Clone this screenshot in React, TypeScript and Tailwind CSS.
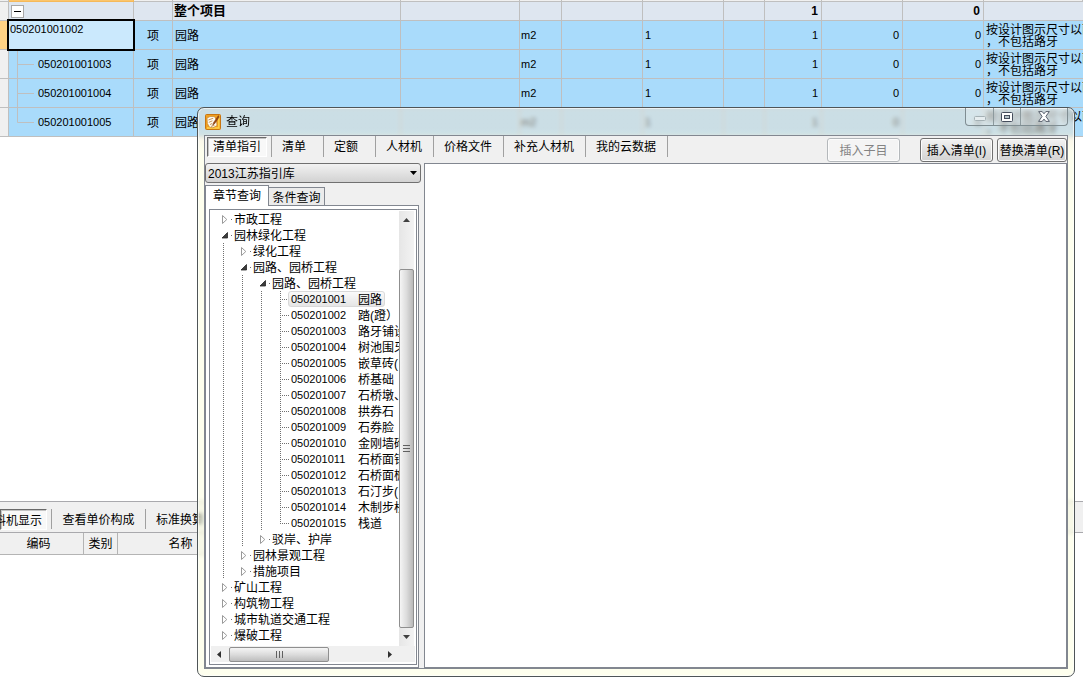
import React, { useState } from "react";

type BillRow = { code: string; selected?: boolean; last?: boolean };

const billRows: BillRow[] = [
  { code: "050201001002", selected: true },
  { code: "050201001003" },
  { code: "050201001004" },
  { code: "050201001005", last: true },
];

type TreeItem = { depth: number; label: string; code?: string; open?: boolean; last?: boolean };

const treeItems: TreeItem[] = [
  { depth: 0, label: "市政工程" },
  { depth: 0, label: "园林绿化工程", open: true },
  { depth: 1, label: "绿化工程" },
  { depth: 1, label: "园路、园桥工程", open: true },
  { depth: 2, label: "园路、园桥工程", open: true },
  { depth: 3, code: "050201001", label: "园路" },
  { depth: 3, code: "050201002", label: "踏(蹬）" },
  { depth: 3, code: "050201003", label: "路牙铺设" },
  { depth: 3, code: "050201004", label: "树池围牙" },
  { depth: 3, code: "050201005", label: "嵌草砖(" },
  { depth: 3, code: "050201006", label: "桥基础" },
  { depth: 3, code: "050201007", label: "石桥墩、" },
  { depth: 3, code: "050201008", label: "拱券石" },
  { depth: 3, code: "050201009", label: "石券脸" },
  { depth: 3, code: "050201010", label: "金刚墙砌" },
  { depth: 3, code: "050201011", label: "石桥面铺" },
  { depth: 3, code: "050201012", label: "石桥面檐" },
  { depth: 3, code: "050201013", label: "石汀步(" },
  { depth: 3, code: "050201014", label: "木制步桥" },
  { depth: 3, code: "050201015", label: "栈道", last: true },
  { depth: 2, label: "驳岸、护岸" },
  { depth: 1, label: "园林景观工程" },
  { depth: 1, label: "措施项目" },
  { depth: 0, label: "矿山工程" },
  { depth: 0, label: "构筑物工程" },
  { depth: 0, label: "城市轨道交通工程" },
  { depth: 0, label: "爆破工程" },
];

const moduleTabs = ["清单", "定额", "人材机", "价格文件", "补充人材机", "我的云数据"];

const cell = "border-r border-b border-[#bfbfbf] p-0 align-middle overflow-hidden whitespace-nowrap";
const endCell = "border-b border-[#bfbfbf] p-0 align-middle overflow-hidden whitespace-nowrap";
const sunken =
  "border border-t-[#696969] border-l-[#696969] border-r-white border-b-white bg-[#f8f8f8] shadow-[inset_1px_1px_0_#c4c4c4]";
const pushButton =
  "h-6 shrink-0 whitespace-nowrap rounded-[3px] border pt-px text-center text-[12px] leading-[22px] shadow-[inset_0_0_0_1px_#fcfcfc]";

function BillTable() {
  return (
    <table className="w-full shrink-0 table-fixed border-separate border-spacing-0">
      <colgroup>
        <col className="w-[9px]" />
        <col className="w-[125px]" />
        <col className="w-[39px]" />
        <col className="w-[228px]" />
        <col className="w-[119px]" />
        <col className="w-[42px]" />
        <col className="w-[81px]" />
        <col className="w-[81px]" />
        <col className="w-[41px]" />
        <col className="w-[57px]" />
        <col className="w-[81px]" />
        <col className="w-[81px]" />
        <col />
      </colgroup>
      <tbody>
        <tr className="h-[2px] bg-[#f0f0f0]">
          {Array.from({ length: 13 }, (_, i) => (
            <td key={i} className={i === 1 ? "border-r border-b border-[#f5b95a] bg-[#fbc56c] p-0" : cell} />
          ))}
        </tr>
        <tr className="h-[19px] bg-[#dee6f0] text-[13px] leading-[18px] font-bold">
          <td className={`${cell} bg-[#f0f0f0]`} />
          <td className={cell}>
            <button
              aria-label="折叠"
              className="ml-[2px] flex size-[13px] items-center justify-center border border-[#a8a8a8] bg-white"
            >
              <span className="h-px w-[7px] bg-black" />
            </button>
          </td>
          <td className={cell} />
          <td className={`${cell} pl-px`}>整个项目</td>
          <td className={cell} />
          <td className={cell} />
          <td className={cell} />
          <td className={cell} />
          <td className={cell} />
          <td className={`${cell} pr-[3px] text-right text-[12px]`}>1</td>
          <td className={cell} />
          <td className={`${cell} pr-[3px] text-right text-[12px]`}>0</td>
          <td className={endCell} />
        </tr>
        {billRows.map((row) => (
          <tr key={row.code} className="h-[29px] bg-[#a9dbfb] text-[11px] leading-4">
            <td className={`${cell} ${row.selected ? "bg-[#fdd285]" : "bg-[#f0f0f0]"}`} />
            {row.selected ? (
              <td className="relative border-r border-b border-[#bfbfbf] p-0">
                <div className="absolute -inset-[2px] border-2 border-black bg-[#cbe9fd] pl-px leading-4">
                  {row.code}
                </div>
              </td>
            ) : (
              <td className={cell}>
                <div className="flex h-7 items-center">
                  <svg className="mr-1 ml-2 h-7 w-[17px] shrink-0" viewBox="0 0 17 28" fill="none" stroke="#bfbfbf">
                    <path d={row.last ? "M.5 0V14.5H17" : "M.5 0V28M.5 14.5H17"} />
                  </svg>
                  {row.code}
                </div>
              </td>
            )}
            <td className={`${cell} pt-[2px] text-center text-[12px]`}>项</td>
            <td className={`${cell} pt-[2px] pl-[2px] text-[12px]`}>园路</td>
            <td className={cell} />
            <td className={`${cell} pl-px`}>m2</td>
            <td className={cell} />
            <td className={`${cell} pl-[2px]`}>1</td>
            <td className={cell} />
            <td className={`${cell} pr-[3px] text-right`}>1</td>
            <td className={`${cell} pr-[3px] text-right`}>0</td>
            <td className={`${cell} pr-[2px] text-right`}>0</td>
            <td className={`${endCell} pt-[2px] pl-[2px] text-[12px] leading-3`}>
              按设计图示尺寸以面
              <br />
              ，不包括路牙
            </td>
          </tr>
        ))}
      </tbody>
    </table>
  );
}

function DetailPane() {
  return (
    <section className="h-[185px] shrink-0 text-[12px]">
      <div className="flex h-8 items-start overflow-hidden border-y border-[#a9a9ad] bg-[#f0f0f0] pt-[7px]">
        <button className={`${sunken} flex h-[21px] w-[47px] shrink-0 justify-end pt-px pr-1 leading-5 whitespace-nowrap`}>
          工料机显示
        </button>
        <span className="ml-1 h-5 w-px bg-[#a0a0a0]" />
        <button className="h-[21px] w-[93px] pt-px leading-5">查看单价构成</button>
        <span className="h-5 w-px bg-[#a0a0a0]" />
        <button className="h-[21px] px-[10px] pt-px leading-5">标准换算</button>
      </div>
      <table className="table-fixed border-separate border-spacing-0 bg-[#f0f0f0]">
        <thead>
          <tr className="h-[22px]">
            <th className="w-[84px] border-r border-b border-[#b4b4b4] p-0 pt-px pr-[6px] font-normal">编码</th>
            <th className="w-[34px] border-r border-b border-[#b4b4b4] p-0 pt-px font-normal">类别</th>
            <th className="w-[126px] border-r border-b border-[#b4b4b4] p-0 pt-px font-normal">名称</th>
          </tr>
        </thead>
      </table>
    </section>
  );
}

function Guide() {
  return (
    <svg className="h-4 w-[19px] shrink-0" viewBox="0 0 19 16" fill="none" stroke="#707070">
      <path d="M2.5 0V16" strokeDasharray="1 1" />
    </svg>
  );
}

function NodeMark({ item }: { item: TreeItem }) {
  return (
    <svg className="h-4 w-[13px] shrink-0" viewBox="0 0 13 16" fill="none">
      {item.code ? (
        <path
          d={item.last ? "M2.5 0V9M2 8.5H12" : "M2.5 0V16M4 8.5H12"}
          stroke="#707070"
          strokeDasharray="1 1"
        />
      ) : (
        <>
          {item.open ? (
            <path d="M6.5 5.5V11H1Z" fill="#3c3c3c" stroke="#262626" strokeWidth=".8" />
          ) : (
            <path d="M1.5 4.5V12.5L5.8 8.5Z" fill="#fff" stroke="#9a9a9a" />
          )}
          <path d="M10 8.5H11" stroke="#707070" />
        </>
      )}
    </svg>
  );
}

function CatalogueTree() {
  const [selected, setSelected] = useState("050201001");
  return (
    <ul className="min-w-0 flex-1 overflow-hidden text-[12px] leading-4">
      {treeItems.map((item, i) => (
        <li key={i} className="flex h-4 pl-[10px] whitespace-nowrap">
          {Array.from({ length: item.depth }, (_, d) => (
            <Guide key={d} />
          ))}
          <NodeMark item={item} />
          {item.code ? (
            <button
              onClick={() => setSelected(item.code!)}
              className={`-ml-[3px] flex h-4 shrink-0 items-center rounded-[3px] border px-[2px] ${
                item.code === selected
                  ? "border-[#d9d9d9] bg-linear-to-b from-[#fafafa] to-[#e5e5e5]"
                  : "border-transparent"
              }`}
            >
              <span className="w-[67px] text-left text-[11px]">{item.code}</span>
              <span className="pt-[2px]">{item.label}</span>
            </button>
          ) : (
            <button className="flex h-4 shrink-0 items-center pt-[2px]">{item.label}</button>
          )}
        </li>
      ))}
    </ul>
  );
}

function VerticalScroll() {
  return (
    <div className="mr-px flex w-[15px] shrink-0 flex-col bg-linear-to-r from-[#e6e6e6] to-[#f3f3f3]">
      <div className="flex h-[58px] justify-center pt-[7px]">
        <svg className="h-1 w-[7px]" viewBox="0 0 7 4"><path d="M0 4L3.5 0L7 4Z" fill="#404040" /></svg>
      </div>
      <div className="flex flex-1 flex-col items-center justify-center gap-[2px] rounded-[2px] border border-[#8f8f8f] bg-linear-to-r from-[#f5f5f5] via-[#dcdcdc] to-[#b9b9b9]">
        <span className="h-px w-[7px] bg-[#606060]" />
        <span className="h-px w-[7px] bg-[#606060]" />
        <span className="h-px w-[7px] bg-[#606060]" />
      </div>
      <div className="flex h-[18px] items-center justify-center">
        <svg className="h-1 w-[7px]" viewBox="0 0 7 4"><path d="M0 0L3.5 4L7 0Z" fill="#404040" /></svg>
      </div>
    </div>
  );
}

function HorizontalScroll() {
  return (
    <div className="flex h-4 shrink-0 items-center bg-[#f0f0f0] pr-4">
      <div className="flex h-4 w-[18px] shrink-0 items-center pl-[6px]">
        <svg className="h-[7px] w-1" viewBox="0 0 4 7"><path d="M4 0L0 3.5L4 7Z" fill="#303030" /></svg>
      </div>
      <div className="flex h-[15px] w-[100px] items-center justify-center gap-[2px] rounded-[2px] border border-[#8f8f8f] bg-linear-to-b from-[#f5f5f5] via-[#dcdcdc] to-[#bdbdbd]">
        <span className="h-[7px] w-px bg-[#606060]" />
        <span className="h-[7px] w-px bg-[#606060]" />
        <span className="h-[7px] w-px bg-[#606060]" />
      </div>
      <div className="flex h-4 flex-1 items-center justify-end pr-[7px]">
        <svg className="h-[7px] w-1" viewBox="0 0 4 7"><path d="M0 0L4 3.5L0 7Z" fill="#303030" /></svg>
      </div>
    </div>
  );
}

function AppIcon() {
  return (
    <svg className="size-4" viewBox="0 0 16 16" fill="none">
      <rect x=".5" y=".5" width="15" height="15" rx="1" fill="#f0a020" stroke="#c87410" />
      <path d="M13.8 2V14H2" stroke="#ffd34a" strokeWidth="1.4" />
      <path d="M2 4L5 2.6L9.4 2.4L11.4 6L12 11.5L8 13.8L4.6 13.2L2.4 9.5Z" fill="#fffaf0" stroke="#c8842a" strokeWidth=".7" />
      <path d="M3.4 6L8.2 4.2M3.8 8.4L7.4 6.8M5 10.6L7.2 9.4M6 12.4L9.4 11.4" stroke="#c08a48" strokeWidth=".9" />
      <path d="M13.4 1.6L8.6 8.4L7.6 11.2L9.8 9.6L14.2 3Z" fill="#9a4610" stroke="#6e2c06" strokeWidth=".4" />
    </svg>
  );
}

function WindowButtons() {
  return (
    <div className="flex h-[18px] overflow-hidden rounded-b-[4px] border border-t-0 border-[#7f8d92] bg-white/20">
      <button aria-label="最小化" className="flex w-[27px] items-center justify-center">
        <svg className="mt-[3px] h-[5px] w-3" viewBox="0 0 12 5">
          <rect x=".5" y=".5" width="11" height="4" rx="1" fill="#e6edef" stroke="#a4b0b4" />
        </svg>
      </button>
      <button aria-label="最大化" className="flex w-[28px] items-center justify-center border-x border-[#8c999d]">
        <svg className="h-[10px] w-3" viewBox="0 0 12 10">
          <rect x=".5" y=".5" width="11" height="9" rx="1" fill="#fff" stroke="#454d5c" />
          <rect x="3.5" y="3.5" width="5" height="3" fill="#b4c2c8" stroke="#454d5c" />
        </svg>
      </button>
      <button aria-label="关闭" className="flex w-[46px] items-center justify-center">
        <svg className="h-[11px] w-3" viewBox="0 0 12 11">
          <path
            d="M.7.6H4.2L6 2.8L7.8.6H11.3L7.9 5.4L11.4 10.4H7.8L6 8.1L4.2 10.4H.6L4.1 5.4Z"
            fill="#fff"
            stroke="#4a5160"
            strokeWidth=".9"
          />
        </svg>
      </button>
    </div>
  );
}

function QueryDialog() {
  return (
    <div
      role="dialog"
      aria-labelledby="query-title"
      className="absolute top-[107px] right-2 bottom-[9px] left-[197px] flex flex-col rounded-[7px] border border-[#4f5557] bg-[linear-gradient(#ede1cf80_0px,#ede1cf80_20px,#fdffdd80_44px)] px-[6px] pb-[7px] shadow-[inset_0_0_0_1px_#ffffffa0] backdrop-blur-[2px]"
    >
      <header className="flex h-[27px] shrink-0 justify-between">
        <div className="flex items-center gap-[5px] pl-px text-[12px]">
          <AppIcon />
          <h1 id="query-title">查询</h1>
        </div>
        <WindowButtons />
      </header>

      <div className="flex min-h-0 flex-1 flex-col border border-[#828790] bg-[#f0f0f0]">
        <div className="flex h-[27px] shrink-0 items-start justify-between">
          <nav className="flex pl-[2px] text-[12px] leading-5">
            <button className={`${sunken} mt-px mr-1 h-5 w-[60px] leading-[18px]`}>清单指引</button>
            {moduleTabs.map((tab) => (
              <button
                key={tab}
                className="h-[21px] min-w-[52px] border-l border-[#a0a0a0] pr-[11px] pl-[10px] text-left last:border-r"
              >
                {tab}
              </button>
            ))}
          </nav>
          <div className="flex pt-[2px]">
            <button disabled className={`${pushButton} mr-5 w-[73px] border-[#b4b8bb] bg-[#f4f4f4] text-[#838383]`}>
              插入子目
            </button>
            <button className={`${pushButton} mr-1 w-[73px] border-[#707070] bg-linear-to-b from-[#f2f2f2] to-[#d2d2d2]`}>
              插入清单(I)
            </button>
            <button className={`${pushButton} w-[70px] border-[#707070] bg-linear-to-b from-[#f2f2f2] to-[#d2d2d2]`}>
              替换清单(R)
            </button>
          </div>
        </div>

        <div className="flex min-h-0 flex-1 gap-[3px]">
          <aside className="flex w-[216px] shrink-0 flex-col">
            <div className="relative">
              <select
                aria-label="指引库"
                className="block h-5 w-full appearance-none rounded-[3px] border border-[#707070] bg-linear-to-b from-[#f2f2f2] to-[#d2d2d2] pt-px pl-[2px] text-[12px] leading-[18px]"
              >
                <option>2013江苏指引库</option>
              </select>
              <svg className="pointer-events-none absolute top-2 right-1 h-1 w-[7px]" viewBox="0 0 7 4">
                <path d="M0 0H7L3.5 4Z" fill="#000" />
              </svg>
            </div>
            <div className="mt-[2px] flex h-5 shrink-0 items-end text-[12px]">
              <button className="relative z-10 -mb-px h-[21px] w-16 border border-b-0 border-[#828790] bg-white leading-5">
                章节查询
              </button>
              <button className="h-[18px] w-14 border border-b-0 border-l-0 border-[#828790] bg-[#ebebeb] pt-px leading-[18px]">
                条件查询
              </button>
            </div>
            <div className="mr-[2px] flex min-h-0 flex-1 border border-[#828790] bg-white pt-[3px] pr-px pb-[2px] pl-[3px]">
              <div className="flex min-w-0 flex-1 flex-col border border-[#828790] px-px pt-px pb-[2px]">
                <div className="flex min-h-0 flex-1">
                  <CatalogueTree />
                  <VerticalScroll />
                </div>
                <HorizontalScroll />
              </div>
            </div>
          </aside>
          <main className="min-w-0 flex-1 border border-[#828790] bg-white" />
        </div>
      </div>
    </div>
  );
}

export default function App() {
  return (
    <div className="relative flex h-screen flex-col overflow-hidden bg-white font-['Liberation_Sans','Noto_Sans_CJK_SC',sans-serif] text-black">
      <BillTable />
      <div className="flex-1" />
      <DetailPane />
      <QueryDialog />
    </div>
  );
}
